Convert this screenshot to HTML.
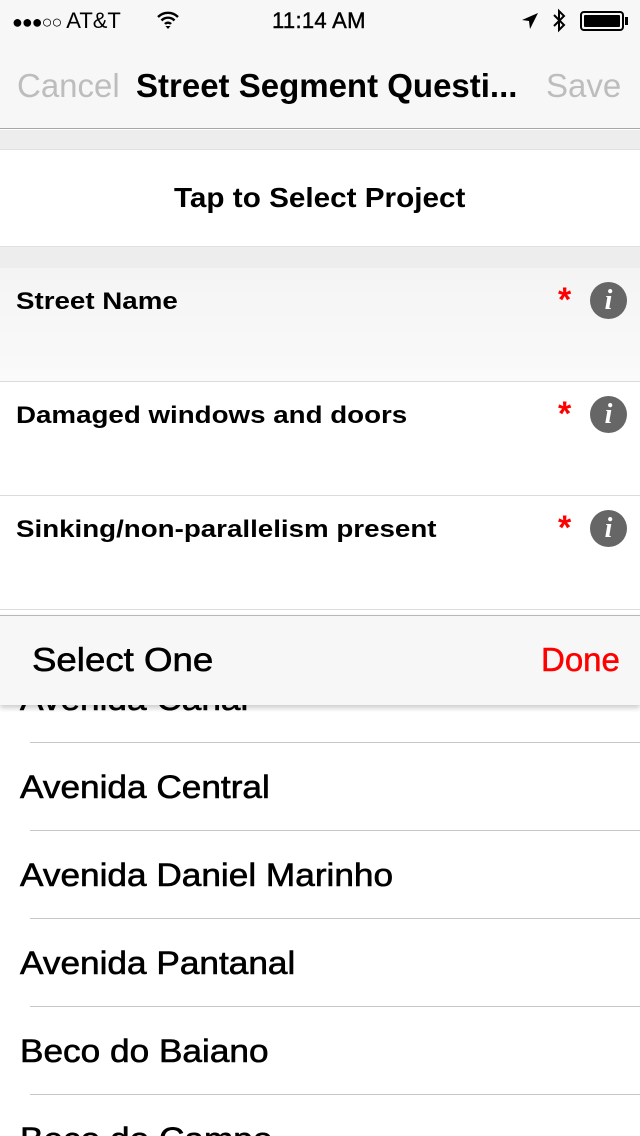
<!DOCTYPE html>
<html><head><meta charset="utf-8"><style>
*{margin:0;padding:0;box-sizing:border-box}
html,body{width:640px;height:1136px;overflow:hidden}
body{background:#fff;font-family:"Liberation Sans",sans-serif;position:relative}
.abs{position:absolute}
.nav{left:0;top:0;width:640px;height:129px;background:#f7f7f7;border-bottom:1px solid #a8a8a8}
.sb{top:8px;font-size:22px;color:#000}
.row{left:0;width:640px;border-bottom:1px solid #dcdcdc}
.q{font-size:24px;font-weight:bold;left:16px;transform:scaleX(1.155);transform-origin:0 0;white-space:nowrap}
.star{color:#f00;font-size:34px;font-weight:bold;left:558px}
.info{width:37px;height:37px;border-radius:50%;background:#666;left:590px;color:#fff;font-family:"Liberation Serif",serif;font-style:italic;font-weight:bold;font-size:28px;text-align:center;line-height:37px}
.li{left:20px;height:88px;font-size:32px;line-height:88px;transform:scaleX(1.1);transform-origin:0 0;white-space:nowrap;-webkit-text-stroke:0.6px #000}
.sep{left:30px;width:610px;height:1px;background:#c8c8c8}
</style></head><body>
<div class="abs nav"></div>
<div class="abs sb" style="left:12px"><span style="font-size:18px;letter-spacing:-1px">●●●○○</span> AT&amp;T</div>
<svg class="abs" style="left:156px;top:10px" width="24" height="20" viewBox="0 0 24 20"><path d="M2 7a14 14 0 0 1 20 0M5.5 10.5a9 9 0 0 1 13 0M9 14a4 4 0 0 1 6 0" stroke="#000" stroke-width="2.4" fill="none"/><path d="M12 19l-2.5-3h5z" fill="#000"/></svg>
<div class="abs sb" style="left:272px;letter-spacing:0.3px;-webkit-text-stroke:0.4px #000">11:14 AM</div>
<svg class="abs" style="left:520px;top:11px" width="20" height="20" viewBox="0 0 20 20"><path d="M18 2L2 9l7 1 1 8z" fill="#000"/></svg>
<svg class="abs" style="left:551px;top:8px" width="16" height="26" viewBox="0 0 16 26"><path d="M3 7l10 10-5 5V3l5 5L3 18" stroke="#000" stroke-width="2" fill="none"/></svg>
<div class="abs" style="left:580px;top:11px;width:44px;height:20px;border:2px solid #000;border-radius:4px;padding:2px"><div style="background:#000;width:100%;height:100%;border-radius:1px"></div></div>
<div class="abs" style="left:625px;top:17px;width:3px;height:8px;background:#000"></div>
<div class="abs" style="left:17px;top:67px;font-size:33px;color:#bdbdbd">Cancel</div>
<div class="abs" style="left:136px;top:67px;font-size:33px;font-weight:bold;color:#000">Street Segment Questi...</div>
<div class="abs" style="left:546px;top:67px;font-size:33px;color:#bdbdbd">Save</div>
<div class="abs" style="left:0;top:130px;width:640px;height:138px;background:#ededed"></div>
<div class="abs" style="left:0;top:149px;width:640px;height:98px;background:#fff;border-top:1px solid #e0e0e0;border-bottom:1px solid #e0e0e0"></div>
<div class="abs" style="left:174px;top:149px;line-height:98px;font-size:28px;font-weight:bold;transform:scaleX(1.06);transform-origin:0 0;white-space:nowrap">Tap to Select Project</div>
<div class="abs row" style="top:268px;height:114px;background:linear-gradient(#f4f4f4,#fafafa)"></div>
<div class="abs row" style="top:382px;height:114px"></div>
<div class="abs row" style="top:496px;height:114px"></div>
<div class="abs q" style="top:288px">Street Name</div>
<div class="abs q" style="top:402px">Damaged windows and doors</div>
<div class="abs q" style="top:516px">Sinking/non-parallelism present</div>
<div class="abs star" style="top:281px">*</div><div class="abs info" style="top:282px">i</div>
<div class="abs star" style="top:395px">*</div><div class="abs info" style="top:396px">i</div>
<div class="abs star" style="top:509px">*</div><div class="abs info" style="top:510px">i</div>
<div class="abs li" style="top:655px">Avenida Canal</div>
<div class="abs sep" style="top:742px"></div>
<div class="abs li" style="top:743px">Avenida Central</div>
<div class="abs sep" style="top:830px"></div>
<div class="abs li" style="top:831px">Avenida Daniel Marinho</div>
<div class="abs sep" style="top:918px"></div>
<div class="abs li" style="top:919px">Avenida Pantanal</div>
<div class="abs sep" style="top:1006px"></div>
<div class="abs li" style="top:1007px">Beco do Baiano</div>
<div class="abs sep" style="top:1094px"></div>
<div class="abs li" style="top:1095px">Beco do Campo</div>
<div class="abs" style="left:0;top:615px;width:640px;height:90px;background:#f7f7f7;border-top:1px solid #b8b8b8;box-shadow:0 3px 5px rgba(0,0,0,0.2)"></div>
<div class="abs" style="left:32px;top:641px;font-size:33px;transform:scaleX(1.11);transform-origin:0 0;white-space:nowrap;-webkit-text-stroke:0.6px #000">Select One</div>
<div class="abs" style="left:541px;top:641px;font-size:33px;color:#f00;-webkit-text-stroke:0.5px #f00">Done</div>
</body></html>
